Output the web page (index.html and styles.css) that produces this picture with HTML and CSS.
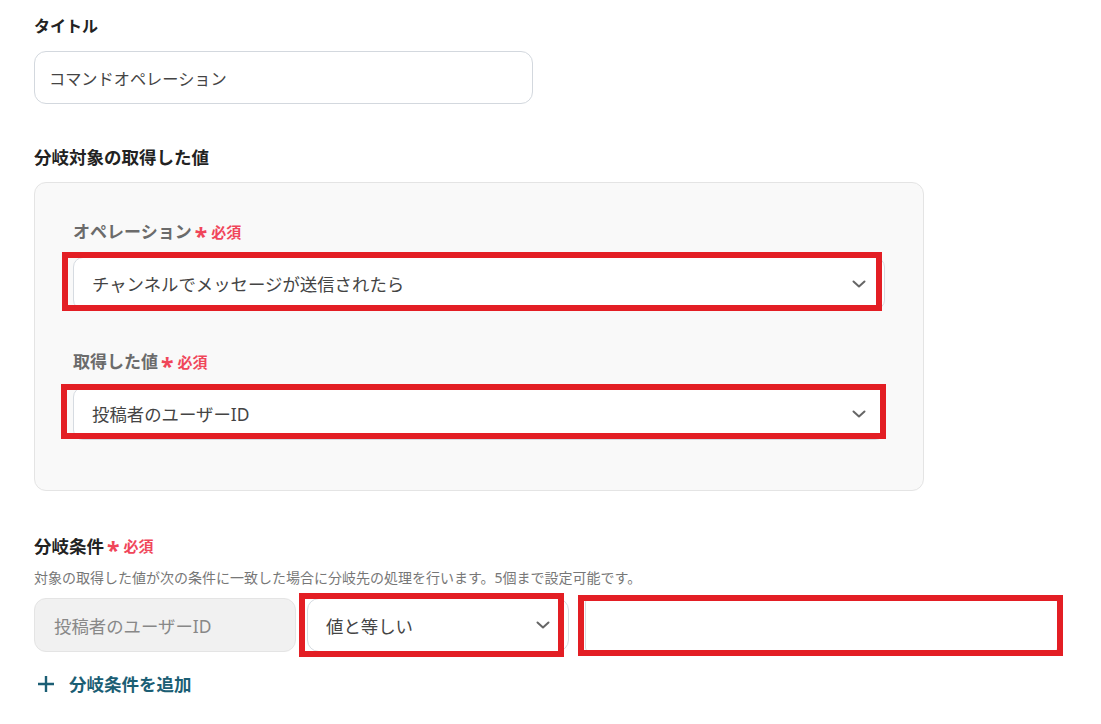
FILE: index.html
```html
<!DOCTYPE html>
<html lang="ja">
<head>
<meta charset="utf-8">
<title>分岐設定</title>
<link rel="stylesheet" href="styles.css">
</head>
<body>
<div class="page">
  <section class="field title-field">
    <div class="label">タイトル</div>
    <div class="text-input">コマンドオペレーション</div>
  </section>

  <section class="field target-field">
    <div class="label">分岐対象の取得した値</div>
    <div class="panel">
      <div class="sub-field">
        <div class="sub-label">オペレーション<span class="req"><span class="ast">*</span>必須</span></div>
        <div class="select-wrap">
          <div class="select">
            <span>チャンネルでメッセージが送信されたら</span>
            <svg class="chev" viewBox="0 0 14 8" width="14" height="8"><path d="M1.5 1.5 L7 6.5 L12.5 1.5" fill="none" stroke="#666" stroke-width="2" stroke-linecap="round" stroke-linejoin="round"/></svg>
          </div>
          <div class="mark mark-op"></div>
        </div>
      </div>
      <div class="sub-field">
        <div class="sub-label">取得した値<span class="req"><span class="ast">*</span>必須</span></div>
        <div class="select-wrap">
          <div class="select">
            <span>投稿者のユーザーID</span>
            <svg class="chev" viewBox="0 0 14 8" width="14" height="8"><path d="M1.5 1.5 L7 6.5 L12.5 1.5" fill="none" stroke="#666" stroke-width="2" stroke-linecap="round" stroke-linejoin="round"/></svg>
          </div>
          <div class="mark mark-val"></div>
        </div>
      </div>
    </div>
  </section>

  <section class="field cond-field">
    <div class="label">分岐条件<span class="req"><span class="ast">*</span>必須</span></div>
    <div class="desc">対象の取得した値が次の条件に一致した場合に分岐先の処理を行います。5個まで設定可能です。</div>
    <div class="cond-row">
      <div class="readonly">投稿者のユーザーID</div>
      <div class="select-wrap">
        <div class="select small">
          <span>値と等しい</span>
          <svg class="chev" viewBox="0 0 14 8" width="14" height="8"><path d="M1.5 1.5 L7 6.5 L12.5 1.5" fill="none" stroke="#666" stroke-width="2" stroke-linecap="round" stroke-linejoin="round"/></svg>
        </div>
        <div class="mark mark-op2"></div>
      </div>
      <div class="select-wrap">
        <div class="value-input"></div>
        <div class="mark mark-input"></div>
      </div>
    </div>
    <div class="add">
      <svg viewBox="0 0 16 16" width="16" height="16"><path d="M8 1 V15 M1 8 H15" stroke="#1b5e74" stroke-width="2.4" stroke-linecap="square" fill="none"/></svg>
      <span>分岐条件を追加</span>
    </div>
  </section>
</div>
</body>
</html>
```

FILE: styles.css
```css
* { box-sizing: border-box; }
html, body { margin: 0; padding: 0; background: #fff; }
body {
  font-family: "Noto Sans", "Noto Sans CJK JP", sans-serif;
  color: #333;
}
.page {
  padding: 14px 0 0 34px;
  display: flex;
  flex-direction: column;
}
.field { display: flex; flex-direction: column; }
.label {
  font-size: 17.5px;
  font-weight: 700;
  line-height: 24px;
  color: #222;
  display: flex;
  align-items: center;
}
.title-field .label { font-size: 16px; }
.title-field .text-input {
  margin-top: 13px;
  width: 499px;
  height: 53px;
  border: 1px solid #d3d8de;
  border-radius: 12px;
  padding: 0 14px;
  display: flex;
  align-items: center;
  font-size: 16.2px;
  color: #444;
}
.target-field { margin-top: 41px; }
.panel {
  margin-top: 13px;
  width: 890px;
  background: #f9f9f9;
  border: 1px solid #e4e4e4;
  border-radius: 12px;
  padding: 37px 38px 50px 38px;
  display: flex;
  flex-direction: column;
  gap: 40px;
}
.sub-field { display: flex; flex-direction: column; gap: 13px; }
.sub-label {
  font-size: 17px;
  font-weight: 700;
  line-height: 24px;
  color: #6b6b6b;
  display: flex;
  align-items: center;
}
.req {
  display: inline-flex;
  align-items: center;
  color: #f0465a;
  font-size: 15px;
  font-weight: 700;
  margin-left: 3px;
}
.ast {
  font-size: 23px;
  line-height: 1;
  margin-right: 4px;
  position: relative;
  top: 4px;
  font-weight: 700;
}
.select-wrap { position: relative; }
.select {
  height: 53px;
  background: #fff;
  border: 1px solid #d6dbe1;
  border-radius: 10px;
  padding: 0 18px 0 18px;
  display: flex;
  align-items: center;
  justify-content: space-between;
  font-size: 17.4px;
  color: #444;
}
.chev { flex: none; margin-right: 0; }
.mark {
  position: absolute;
  border: 6px solid #e31e24;
  pointer-events: none;
}
.mark-op { left: -11px; right: 3px; top: -5px; bottom: -1px; }
.mark-val { left: -12px; right: -1px; top: -3px; bottom: 1px; }
.mark-op2 { left: -8px; right: 5px; top: -5px; bottom: -5px; }
.mark-input { left: -7px; right: -5px; top: -3px; bottom: -4px; }

.cond-field { margin-top: 43px; }
.desc {
  margin-top: 10px;
  font-size: 14px;
  line-height: 20px;
  color: #777;
}
.cond-row {
  margin-top: 10px;
  display: flex;
  align-items: stretch;
}
.readonly {
  width: 262px;
  height: 54px;
  background: #f1f1f1;
  border: 1px solid #e4e4e4;
  border-radius: 12px;
  padding: 0 19px;
  display: flex;
  align-items: center;
  font-size: 17.4px;
  color: #888;
}
.cond-row > .select-wrap:nth-child(2) { margin-left: 11px; width: 262px; }
.cond-row > .select-wrap:nth-child(3) { margin-left: 16px; width: 473px; }
.select.small { height: 54px; border-radius: 12px; }
.value-input {
  height: 54px;
  background: #fff;
  border: 1px solid #d6dbe1;
  border-radius: 4px;
}
.add {
  margin-top: 20px;
  display: flex;
  align-items: center;
  gap: 15px;
  padding-left: 4px;
  font-size: 17.5px;
  font-weight: 700;
  line-height: 24px;
  color: #1b5e74;
}
```
